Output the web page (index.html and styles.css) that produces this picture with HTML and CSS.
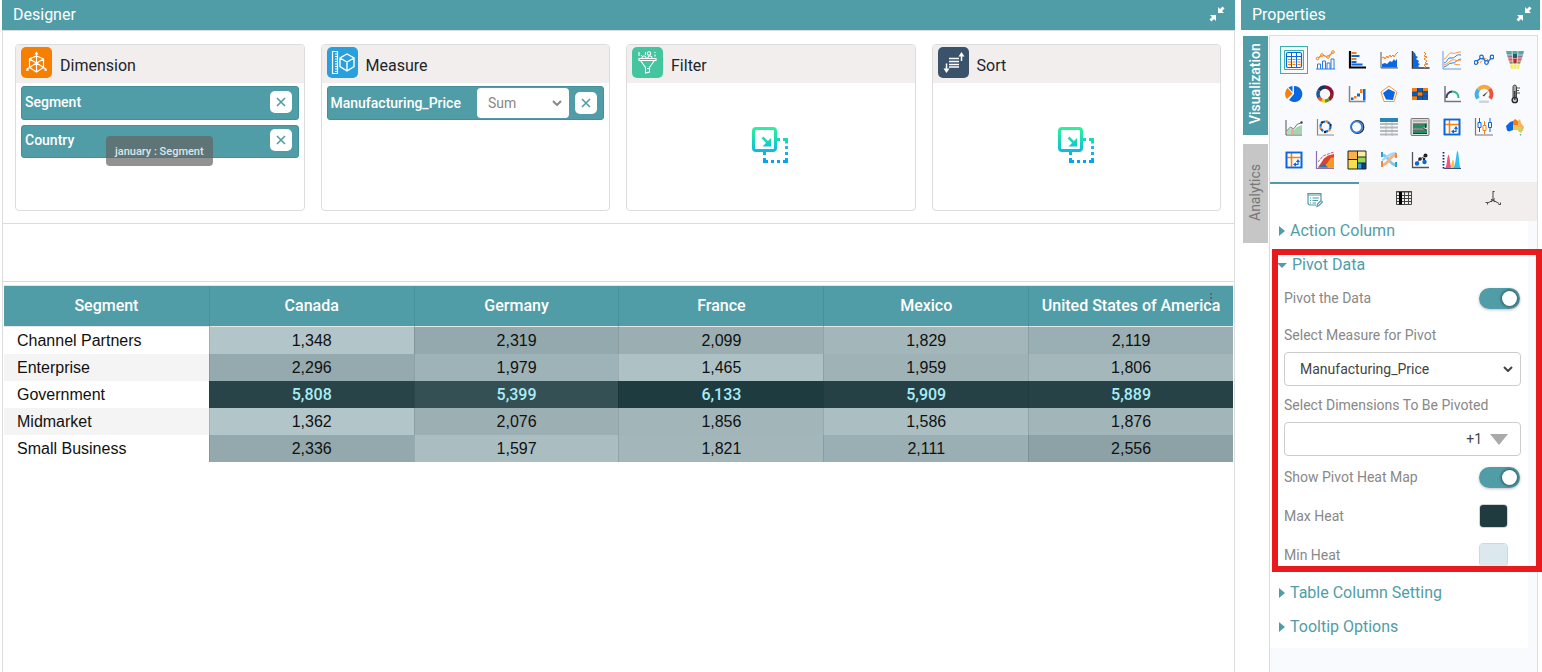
FILE: index.html
```html
<!DOCTYPE html>
<html lang="en">
<head>
    <meta charset="UTF-8">
    <meta name="viewport" content="width=device-width, initial-scale=1.0">
    <title>Designer</title>
    <link rel="stylesheet" href="styles.css">
</head>
<body>
    <svg class="defs" width="0" height="0" aria-hidden="true">
        <defs>
            <linearGradient id="dropFill" gradientUnits="userSpaceOnUse" x1="0" y1="0" x2="0" y2="37">
                <stop offset="0" stop-color="#2af598"/>
                <stop offset="1" stop-color="#009efd"/>
            </linearGradient>
            <symbol id="drop" viewBox="0 0 37 37">
                <g fill="none" stroke="url(#dropFill)" stroke-width="3">
                    <rect x="1.5" y="1.5" width="22" height="22" rx="2.5"/>
                    <path d="M10.5 10.5l7 7" stroke-width="2.5"/>
                    <path d="M25 12.5h3M31 12.5h3.5v4M34.5 19v3M34.5 25v3M34.5 31v3.5h-3.500M28 34.5h-3M22 34.5h-3M16 34.5h-3.500v-3.500M12.5 28v-3"/>
                </g>
                <path d="M19 11v8.5h-8.500z" fill="url(#dropFill)"/>
            </symbol>
            <symbol id="compress" viewBox="0 0 16 16">
                <path d="M9 1v6h6l-2-2 2.5-2.500-2-2L11 3zM7 15V9H1l2 2-2.500 2.5 2 2L5 13z" fill="#fff"/>
            </symbol>
            <symbol id="pivot" viewBox="0 0 20 20">
                <path d="M2.5 2.5h15v15h-15z" fill="#fff" stroke="#0b67df" stroke-width="1.6"/>
                <path d="M7.5 3v14M3 7.5h14" stroke="#f57f10" stroke-width="1.6"/>
                <path d="M2.5 2.5h15v15h-15z" fill="none" stroke="#0b67df" stroke-width="1.6"/>
                <path d="M10.5 14.5h3.500v-4M12.500 12l1.500-2 1.500 2M12 13l-2 1.500 2 1.500" fill="none" stroke="#0b67df" stroke-width="1.200"/>
            </symbol>
        </defs>
    </svg>

    <div class="app">
        <main class="designer">
            <header class="bar">
                <h1>Designer</h1>
                <button type="button" class="bar-btn" aria-label="Collapse designer"><svg width="16" height="16"><use href="#compress"/></svg></button>
            </header>
            <div class="designer-body">
                <div class="cards">
                    <section class="card">
                        <h2 class="card-head">
                            <svg class="card-icon" viewBox="0 0 31 31">
                                <rect width="31" height="31" rx="5" fill="#f77f00"/>
                                <g fill="none" stroke="#fff" stroke-width="1.2">
                                    <path d="M15.5 9L22.5 12v8.500L15.500 25 8.500 20.500V12zM8.500 12l7 4 7-4M15.500 6v19M8.500 20.500l7-4.500 7 4.500M8.500 20.500l-2.500 2M22.500 20.500l2.500 2"/>
                                </g>
                                <path d="M15.500 4.500l2 3h-4zM5 24l1-3.500 2 3zM26 24l-1-3.500-2 3z" fill="#fff"/>
                            </svg>
                            Dimension
                        </h2>
                        <div class="card-body">
                            <div class="chip">
                                <span>Segment</span>
                                <button type="button" class="remove" aria-label="Remove Segment"><svg viewBox="0 0 10 10"><path d="M1 1l8 8M9 1L1 9"/></svg></button>
                            </div>
                            <div class="chip">
                                <span>Country</span>
                                <button type="button" class="remove" aria-label="Remove Country"><svg viewBox="0 0 10 10"><path d="M1 1l8 8M9 1L1 9"/></svg></button>
                                <div class="tip">january : Segment</div>
                            </div>
                        </div>
                    </section>

                    <section class="card">
                        <h2 class="card-head">
                            <svg class="card-icon" viewBox="0 0 31 31">
                                <rect width="31" height="31" rx="5" fill="#27a0dc"/>
                                <g fill="none" stroke="#fff" stroke-width="1.2">
                                    <path d="M5.500 4.500h5v22h-5zM10 7H8M10 9.500H8M10 12H8M10 14.500H8M10 17H8M10 19.500H8M10 22H8M10 24.500H8"/>
                                    <path d="M20 7l7 4v8.500l-7 4.500-7-4.500V11zM13 11l7 4 7-4M20 15v9" stroke-width="1.4"/>
                                </g>
                            </svg>
                            Measure
                        </h2>
                        <div class="card-body">
                            <div class="chip chip-measure">
                                <span>Manufacturing_Price</span>
                                <select class="agg" aria-label="Aggregation">
                                    <option>Sum</option>
                                </select>
                                <button type="button" class="remove" aria-label="Remove Manufacturing_Price"><svg viewBox="0 0 10 10"><path d="M1 1l8 8M9 1L1 9"/></svg></button>
                            </div>
                        </div>
                    </section>

                    <section class="card">
                        <h2 class="card-head">
                            <svg class="card-icon" viewBox="0 0 31 31">
                                <rect width="31" height="31" rx="5" fill="#45c4a0"/>
                                <g fill="none" stroke="#fff" stroke-width="1.1">
                                    <path d="M7 11.500h17v2H7zM8.500 13.500l5 7V26l4-1v-4.500l5-7M15 21.500h2"/>
                                    <circle cx="17" cy="6.500" r="1.700"/>
                                    <path d="M10 11a2 2 0 0 1 4 0M16 11a2 2 0 0 1 4 0M7 5v4M13.500 5v3M23 5v1M23 7.500v2M9.500 8v1"/>
                                </g>
                            </svg>
                            Filter
                        </h2>
                        <div class="card-body card-empty"><svg width="37" height="37"><use href="#drop"/></svg></div>
                    </section>

                    <section class="card">
                        <h2 class="card-head">
                            <svg class="card-icon" viewBox="0 0 31 31">
                                <rect width="31" height="31" rx="5" fill="#3a536a"/>
                                <path d="M11 11.500h10M11 14.500h10M11 17.500h10M11 20h10M8.500 16.500v6M23.500 14V8" fill="none" stroke="#fff" stroke-width="1.5"/>
                                <path d="M5.500 21.500h6l-3 4.500zM20.500 9.500h6l-3-4.500z" fill="#fff"/>
                            </svg>
                            Sort
                        </h2>
                        <div class="card-body card-empty"><svg width="37" height="37"><use href="#drop"/></svg></div>
                    </section>
                </div>

                <div class="spacer"></div>

                <div class="result">
                    <button type="button" class="kebab" aria-label="Table menu"><i></i><i></i><i></i></button>
                    <table class="pivot">
                        <thead>
                            <tr>
                                <th>Segment</th>
                                <th>Canada</th>
                                <th>Germany</th>
                                <th>France</th>
                                <th>Mexico</th>
                                <th>United States of America</th>
                            </tr>
                        </thead>
                        <tbody>
                            <tr>
                                <td>Channel Partners</td>
                                <td style="background-color: #b2c5c9">1,348</td>
                                <td style="background-color: #94a9ad">2,319</td>
                                <td style="background-color: #9bafb3">2,099</td>
                                <td style="background-color: #a3b7bb">1,829</td>
                                <td style="background-color: #9aafb3">2,119</td>
                            </tr>
                            <tr>
                                <td>Enterprise</td>
                                <td style="background-color: #95aaae">2,296</td>
                                <td style="background-color: #9eb3b7">1,979</td>
                                <td style="background-color: #aec2c6">1,465</td>
                                <td style="background-color: #9fb3b7">1,959</td>
                                <td style="background-color: #a4b8bc">1,806</td>
                            </tr>
                            <tr class="hot">
                                <td>Government</td>
                                <td style="background-color: #284448">5,808</td>
                                <td style="background-color: #355054">5,399</td>
                                <td style="background-color: #1e3b3f">6,133</td>
                                <td style="background-color: #254145">5,909</td>
                                <td style="background-color: #264246">5,889</td>
                            </tr>
                            <tr>
                                <td>Midmarket</td>
                                <td style="background-color: #b2c5c9">1,362</td>
                                <td style="background-color: #9cb0b4">2,076</td>
                                <td style="background-color: #a2b6ba">1,856</td>
                                <td style="background-color: #abbec2">1,586</td>
                                <td style="background-color: #a2b6ba">1,876</td>
                            </tr>
                            <tr>
                                <td>Small Business</td>
                                <td style="background-color: #93a9ad">2,336</td>
                                <td style="background-color: #aabec2">1,597</td>
                                <td style="background-color: #a3b7bb">1,821</td>
                                <td style="background-color: #9aafb3">2,111</td>
                                <td style="background-color: #8da2a6">2,556</td>
                            </tr>
                        </tbody>
                    </table>
                </div>
            </div>
        </main>

        <aside class="properties">
            <header class="bar">
                <h1>Properties</h1>
                <button type="button" class="bar-btn" aria-label="Collapse properties"><svg width="16" height="16"><use href="#compress"/></svg></button>
            </header>
            <div class="properties-body">
                <nav class="side-tabs">
                    <button type="button" class="side-tab active">Visualization</button>
                    <button type="button" class="side-tab">Analytics</button>
                </nav>

                <div class="panel">
                    <div class="charts">
                        <button type="button" class="chart selected" aria-label="Table">
                            <svg viewBox="0 0 20 20"><path d="M.5.5h19v19H.5z" fill="none" stroke="#38b2ac"/><rect x="2.500" y="2.500" width="15" height="15" rx="1.5" fill="#fff" stroke="#0b67df" stroke-width="1.2"/><path d="M3 6.500h14M7.500 3v14M12.500 3v14" stroke="#0b67df"/><path d="M4 9.500h3M4 12h3M4 14.500h3M8.500 9.500h3M8.500 12h3M8.500 14.500h3M13.500 9.500h3M13.500 12h3M13.500 14.500h3" stroke="#f57f10"/></svg>
                        </button>
                        <button type="button" class="chart" aria-label="Combo">
                            <svg viewBox="0 0 20 20"><path d="M2.500 19v-5h3v5M7.500 19v-8h3v8M12 19v-6h3v6M16 19V9h3v10M1 19h19" fill="none" stroke="#2b7de3"/><path d="M2 9l5-4 6 2 5-5" fill="none" stroke="#f57f10" stroke-width="1.2"/><g fill="#fff" stroke="#f57f10"><circle cx="2.500" cy="8.500" r="1.3"/><circle cx="7" cy="5" r="1.3"/><circle cx="13" cy="7" r="1.3"/><circle cx="18" cy="2" r="1.3"/></g></svg>
                        </button>
                        <button type="button" class="chart" aria-label="Bar">
                            <svg viewBox="0 0 20 20"><path d="M3 1v16.500h16" fill="none" stroke="#050505" stroke-width="2.2"/><path d="M4.500 3h5M4.500 9h5" stroke="#f57f10" stroke-width="2"/><path d="M4.500 6h8M4.500 12h5M4.500 14.500h11" stroke="#0b67df" stroke-width="2"/></svg>
                        </button>
                        <button type="button" class="chart" aria-label="Area">
                            <svg viewBox="0 0 20 20"><path d="M2 2v16h17" fill="none" stroke="#555"/><path d="M3 17.500V14l3-1 2 1 3-3 2 1 2-3 1 2 2-2v8.500z" fill="#0b67df"/><path d="M3 8l2-1 1 2 2-3 1 2 2-3 1 2 2-2 1 2 2-3 2-2" fill="none" stroke="#f57f10"/></svg>
                        </button>
                        <button type="button" class="chart" aria-label="Vertical area">
                            <svg viewBox="0 0 20 20"><path d="M2.500 1v17h17" fill="none" stroke="#333" stroke-width="1.5"/><path d="M3 2l2 1 1 3 2 1-2 2 3 2-1 2 2 1-2 2 2 1.500H3z" fill="#0b67df"/><path d="M14 2l2 2-2 2 3 1-3 2 3 2-2 2 3 1-4 1 2 2-2 1" fill="none" stroke="#f57f10"/></svg>
                        </button>
                        <button type="button" class="chart" aria-label="Line">
                            <svg viewBox="0 0 20 20"><path d="M1 1v18h18" fill="none" stroke="#5f9be8"/><path d="M2 13c4-1 3-5 6-5s4 0 6-2 3-1 5-1M2 17c4-1 4-4 8-4s4-3 9-4" fill="none" stroke="#2b7de3"/><path d="M2 9c3 0 4-7 8-6 4 1 4-1 9-1M2 15c4-1 5-4 8-5s5 2 9 0M12 14l6 1" fill="none" stroke="#f5973c"/></svg>
                        </button>
                        <button type="button" class="chart" aria-label="Points">
                            <svg viewBox="0 0 20 20"><path d="M2 12l6-5 5 6 5-6" fill="none" stroke="#0b67df" stroke-width="1.3"/><path d="M3 13l4-1 3-4 3 1 2 2 3-5" fill="none" stroke="#f57f10" stroke-dasharray="2 1"/><g fill="#fff" stroke="#0b67df" stroke-width="1.2"><circle cx="2" cy="12.500" r="1.800"/><circle cx="7.500" cy="7" r="1.800"/><circle cx="12.500" cy="12.500" r="1.800"/><circle cx="18" cy="7" r="1.800"/></g></svg>
                        </button>
                        <button type="button" class="chart" aria-label="Funnel">
                            <svg viewBox="0 0 20 20"><path d="M1 1h18l-1 4H2z" fill="#59a5a0"/><path d="M2 5h16l-1 3H3z" fill="#8a75a8"/><path d="M3 8h14l-1 3H4z" fill="#e2574f"/><path d="M4 11h12l-1 3H5z" fill="#7e936a"/><path d="M5 14h10l-1 5H6z" fill="#f6e86e"/><path d="M7 1l1.500 18M13 1l-1.500 18M2 5h16M3 8h14M4 11h12M5 14h10" stroke="#fff" stroke-width=".6"/><path d="M8 4h4v4H8z" fill="#275b66"/><path d="M8.500 9h3v4h-3z" fill="#a82f3e"/></svg>
                        </button>
                        <button type="button" class="chart" aria-label="Pie">
                            <svg viewBox="0 0 20 20"><path d="M10 10V2a8 8 0 1 1-5 14z" fill="#0b67df"/><path d="M8.500 9.500L3 15a8 8 0 0 1 .5-11z" fill="#f57f10"/><path d="M8.500 8V2a8 8 0 0 0-4 1.500z" fill="#0b67df"/></svg>
                        </button>
                        <button type="button" class="chart" aria-label="Donut">
                            <svg viewBox="0 0 20 20"><g fill="none" stroke-width="3.5"><path d="M10 3a7 7 0 0 1 7 7" stroke="#8e0c37"/><path d="M17 10a7 7 0 0 1-3 5.500" stroke="#8c2424"/><path d="M14 15.500a7 7 0 0 1-4 1.500" stroke="#5a9d1b"/><path d="M10 17a7 7 0 0 1-3-.8" stroke="#f3d900"/><path d="M7 16.200a7 7 0 0 1-3-2.700" stroke="#f15a29"/><path d="M4 13.500A7 7 0 0 1 4 6.500" stroke="#1d579e"/><path d="M4 6.500A7 7 0 0 1 10 3" stroke="#163463"/></g></svg>
                        </button>
                        <button type="button" class="chart" aria-label="Waterfall">
                            <svg viewBox="0 0 20 20"><path d="M2.500 2v15.500h16" fill="none" stroke="#888" stroke-width="1.5"/><path d="M4 13.500h2.500v2.500H4zM10 9.500h3v3h-3zM16 5h2.500v11.500H16z" fill="#0b67df"/><path d="M7 12h2.500v2.500H7zM13 5h2.500v4H13z" fill="#f57f10"/></svg>
                        </button>
                        <button type="button" class="chart" aria-label="Radar">
                            <svg viewBox="0 0 20 20"><path d="M10 2l8 6-3 9.500H5L2 8z" fill="#fff" stroke="#f5973c"/><path d="M9.500 5l6.500 3-2 8-7-.5-3-6.500z" fill="#0b67df"/></svg>
                        </button>
                        <button type="button" class="chart" aria-label="Heat map">
                            <svg viewBox="0 0 20 20"><path d="M2 4h16v12H2z" fill="#0b5cc7"/><path d="M2 4h5v4H2zM7 8h6v4H7zM2 12h5v4H2zM13 4h5v3h-5z" fill="#f57f10"/><path d="M2 8h16M2 12h16M7.500 4v12M12.500 4v12" stroke="#333" stroke-width=".6"/></svg>
                        </button>
                        <button type="button" class="chart" aria-label="Arc">
                            <svg viewBox="0 0 20 20"><path d="M3 2v15.500h16" fill="none" stroke="#777" stroke-width="1.5"/><path d="M4.500 14a6 6 0 0 1 6-6.500" fill="none" stroke="#3d4060" stroke-width="2"/><path d="M10.500 7.500a6 6 0 0 1 6 6.500" fill="none" stroke="#28bf83" stroke-width="2"/></svg>
                        </button>
                        <button type="button" class="chart" aria-label="Gauge">
                            <svg viewBox="0 0 20 20"><g fill="none" stroke-width="4"><path d="M4 14.500a7.500 7.500 0 0 1 .5-9" stroke="#48aef0"/><path d="M4.500 5.500a7.500 7.500 0 0 1 11-.5" stroke="#f8a73c"/><path d="M15.500 5a7.500 7.500 0 0 1 .5 9.500" stroke="#ef5139"/></g><path d="M8.500 11.500l6-4.500-4.500 5.500z" fill="#444"/><rect x="5" y="16.500" width="10" height="2.500" rx="1" fill="#ccd6e0"/></svg>
                        </button>
                        <button type="button" class="chart" aria-label="Thermometer">
                            <svg viewBox="0 0 20 20"><path d="M8 13V2.500a1.800 1.800 0 0 1 3.500 0V13" fill="#aaa" stroke="#444"/><circle cx="9.800" cy="16" r="2.700" fill="#ccc" stroke="#222" stroke-width="1.3"/><path d="M9.800 7v9" stroke="#333" stroke-width="1.4"/><path d="M12 4h3M12 6.500h2M12 9h3" stroke="#555"/></svg>
                        </button>
                        <button type="button" class="chart" aria-label="Trend">
                            <svg viewBox="0 0 20 20"><path d="M2 3v15h16" fill="none" stroke="#555"/><path d="M3 17.500V14l3-3 2 3v3.500z" fill="#b2ddb9"/><path d="M7 17.500V11l3 2v4.500z" fill="#f4a4a4"/><path d="M10 17.500V13l3-3 5-2v9.500z" fill="#a5d5ae"/><path d="M2.500 14l4-4 3 2 4-5 4-1" fill="none" stroke="#777"/><circle cx="17.500" cy="5.500" r="1.2" fill="#444"/></svg>
                        </button>
                        <button type="button" class="chart" aria-label="Polar scatter">
                            <svg viewBox="0 0 20 20"><path d="M2.500 2v16H19" fill="none" stroke="#888" stroke-width="1.2"/><circle cx="10.500" cy="9.500" r="5" fill="none" stroke="#0b67df" stroke-dasharray="3 2" stroke-width="2.2"/><g fill="#222"><circle cx="7" cy="5.500" r="1.2"/><circle cx="15.500" cy="8" r="1.2"/><circle cx="10" cy="15" r="1.2"/></g><g fill="#f57f10"><circle cx="12" cy="4.500" r="1.2"/><circle cx="5.500" cy="11" r="1.2"/><circle cx="14.500" cy="13" r="1.2"/></g></svg>
                        </button>
                        <button type="button" class="chart" aria-label="Ring">
                            <svg viewBox="0 0 20 20"><circle cx="10.500" cy="10" r="6.200" fill="none" stroke="#333" stroke-width="1.400"/><circle cx="9.500" cy="10" r="5.600" fill="none" stroke="#2b7de3" stroke-width="1.700"/></svg>
                        </button>
                        <button type="button" class="chart" aria-label="Grid">
                            <svg viewBox="0 0 20 20"><path d="M1 1h18v4H1z" fill="#2d83b5"/><path d="M1 7h18M1 10.500h18M1 14h18M1 17.500h18" stroke="#b6bcbc" stroke-width="2"/><path d="M7 5v14M13 5v14" stroke="#a6adad" stroke-width=".6"/></svg>
                        </button>
                        <button type="button" class="chart" aria-label="Cards">
                            <svg viewBox="0 0 20 20"><rect x="1" y="1.500" width="18" height="17" rx="1" fill="#ddd" stroke="#777"/><path d="M3 4h14" stroke="#888"/><path d="M3 7.500h14v3H3zM3 13.500h14v3H3z" fill="#169563"/><path d="M3 7h14M3 11h10l3 2M3 13h14M3 16.500h14M15.500 7v4" fill="none" stroke="#333"/></svg>
                        </button>
                        <button type="button" class="chart" aria-label="Pivot"><svg><use href="#pivot"/></svg></button>
                        <button type="button" class="chart" aria-label="Candlestick">
                            <svg viewBox="0 0 20 20"><path d="M1.500 1v17H19" fill="none" stroke="#777" stroke-width="1.2"/><path d="M5.500 1v14M16 1v14" stroke="#0b67df"/><path d="M10.500 4v13" stroke="#f57f10"/><path d="M4 5.500h3v5H4zM14.500 5.500h3v5h-3z" fill="#fff" stroke="#0b67df"/><path d="M9 8.500h3v5H9z" fill="#fff" stroke="#f57f10"/></svg>
                        </button>
                        <button type="button" class="chart" aria-label="Map">
                            <svg viewBox="0 0 20 20"><path d="M1 9l4-4 3-1v9l-4 1.500-2-1z" fill="#0b67df"/><path d="M8 4l2-2 3 2v4H8z" fill="#f57f10"/><path d="M8 8h5v5H8z" fill="#f7c34a"/><path d="M13 4l2-2 1 4 3 4-1 3-2 3-3-2z" fill="#f8b25c"/><path d="M13 10h3v5l-3-1z" fill="#c5d96a"/><path d="M14.500 17h2l-1 2z" fill="#4cbfa1"/></svg>
                        </button>
                        <button type="button" class="chart" aria-label="Pivot grid"><svg><use href="#pivot"/></svg></button>
                        <button type="button" class="chart" aria-label="Stacked area">
                            <svg viewBox="0 0 20 20"><path d="M3 17.500l6-9 4-3 6-1.500v13.500z" fill="#e0402f"/><path d="M7 17.500l5-4 4-6h3v10z" fill="#f59a1c"/><path d="M3 17.500l6-4 4 4z" fill="#38729b"/><path d="M3 12l5-6 5-2 6-2" fill="none" stroke="#c65b7c" stroke-dasharray="3 1"/><path d="M1.500 1v17.500H19" fill="none" stroke="#8a6fb5" stroke-width="1.2"/></svg>
                        </button>
                        <button type="button" class="chart" aria-label="Treemap">
                            <svg viewBox="0 0 20 20"><path d="M1 1h18v18H1z" fill="#f3df4a"/><path d="M1 1h9v8H1z" fill="#fdb147"/><path d="M10 1h9v6h-9z" fill="#f9eda0"/><path d="M11 7h8v6h-8z" fill="#8fdc5c"/><path d="M11 13h4v6h-4z" fill="#27a3e2"/><path d="M15 13h4v6h-4z" fill="#0b3fa8"/><path d="M1 1h18v18H1zM1 9.500h9.500M10.500 1v18M10.500 7H19M10.500 13H19M15 13v6" fill="none" stroke="#222"/></svg>
                        </button>
                        <button type="button" class="chart" aria-label="Sankey">
                            <svg viewBox="0 0 20 20"><path d="M3 5c7 0 7 10 14 10" fill="none" stroke="#7fcbea" stroke-width="3"/><path d="M3 15c7 0 7-10 14-10" fill="none" stroke="#f6b184" stroke-width="3"/><path d="M3 10c4 0 4-6 14-7" fill="none" stroke="#9ed7ef" stroke-width="2"/><path d="M3 2v5M17 12v5" stroke="#2f9ed8" stroke-width="2"/><path d="M3 11v6M17 3v5" stroke="#f08843" stroke-width="2"/></svg>
                        </button>
                        <button type="button" class="chart" aria-label="Scatter">
                            <svg viewBox="0 0 20 20"><path d="M2.500 2v15.500H19" fill="none" stroke="#555" stroke-width="1.3"/><path d="M6 14l4-5 5-3" fill="none" stroke="#333" stroke-width=".8"/><g fill="#222"><circle cx="10" cy="9" r="1.800"/><circle cx="15.500" cy="5.500" r="2"/><circle cx="14" cy="9" r="1.3"/></g><g fill="#0b67df"><circle cx="7" cy="13.500" r="2.2"/><circle cx="14.500" cy="12" r="2.2"/></g></svg>
                        </button>
                        <button type="button" class="chart" aria-label="Peaks">
                            <svg viewBox="0 0 20 20"><path d="M1 1h18v18H1z" fill="#fff"/><path d="M3 18c2 0 2-13 3.500-13S8 18 10 18z" fill="#f0567c"/><path d="M8 18c1.500 0 1.500-8 3-8s1 8 3 8z" fill="#f9c34e"/><path d="M11 18c3 0 3-17 4.500-17S17 18 19 18z" fill="#33c2f0"/><path d="M1.500 2v17" stroke="#1a237e" stroke-width="1.8" stroke-dasharray="1.5 1.5"/><path d="M2 18.500h17" stroke="#38508a"/></svg>
                        </button>
                    </div>

                    <div class="tabs">
                        <button type="button" class="tab active" aria-label="Settings">
                            <svg width="16" height="16" viewBox="0 0 16 16" fill="none" stroke="#4f9ca6" stroke-width="1.2"><path d="M9 13H3a2 2 0 0 1-2-2V1.500h13V8M1 3h13M3 6h1M5.500 6H12M3 8.500h1M5.500 8.500H11M3 11h1M5.500 11H9"/><path d="M10 14.500l.5-2.500 3.500-3.500 1.500 1.500-3.500 3.500z"/></svg>
                        </button>
                        <button type="button" class="tab" aria-label="Columns">
                            <svg width="16" height="16" viewBox="0 0 16 16" fill="none" stroke="#444"><path d="M.5 1.500h15v13H.5zM0 2h16M.5 5.500h15M.5 8.500h15M.5 11.500h15M8.500 2v12M12.500 2v12"/><path d="M4.500 2v12.500" stroke="#000" stroke-width="3"/></svg>
                        </button>
                        <button type="button" class="tab" aria-label="Axis">
                            <svg width="16" height="16" viewBox="0 0 16 16" fill="none" stroke="#444"><path d="M8 1v9l-6 3.500M8 10l6 3.500M6 9l4 3M10 8.500L6 12M8 1.500h1.500M.5 12.500h2v2M15.500 12.500v2h-2"/></svg>
                        </button>
                    </div>

                    <div class="options">
                        <details>
                            <summary>Action Column</summary>
                        </details>
                        <details class="pivot-data" open>
                            <summary>Pivot Data</summary>
                            <div class="fields">
                                <div class="row">
                                    <label for="pivotOn">Pivot the Data</label>
                                    <input type="checkbox" class="toggle" id="pivotOn" checked>
                                </div>
                                <div class="field">
                                    <label for="measure">Select Measure for Pivot</label>
                                    <select class="box" id="measure">
                                        <option>Manufacturing_Price</option>
                                    </select>
                                </div>
                                <div class="field">
                                    <label for="dims">Select Dimensions To Be Pivoted</label>
                                    <button type="button" class="box multi" id="dims">+1 <i class="caret"></i></button>
                                </div>
                                <div class="row">
                                    <label for="heatOn">Show Pivot Heat Map</label>
                                    <input type="checkbox" class="toggle" id="heatOn" checked>
                                </div>
                                <div class="row">
                                    <label for="maxHeat">Max Heat</label>
                                    <input type="color" class="swatch" id="maxHeat" value="#1f3b40">
                                </div>
                                <div class="row">
                                    <label for="minHeat">Min Heat</label>
                                    <input type="color" class="swatch" id="minHeat" value="#dbe9ee">
                                </div>
                            </div>
                            <div class="highlight"></div>
                        </details>
                        <details>
                            <summary>Table Column Setting</summary>
                        </details>
                        <details>
                            <summary>Tooltip Options</summary>
                        </details>
                    </div>
                </div>
            </div>
        </aside>
    </div>
</body>
</html>
```
FILE: styles.css
```css
* {
    box-sizing: border-box;
}

body {
    margin: 0;
    background-color: #fff;
    color: #212529;
    font-family: Roboto, sans-serif;
    font-size: 14px;
    overflow-x: hidden;
}

button,
select,
input {
    font-family: inherit;
    margin: 0;
}

button {
    border: none;
    padding: 0;
    background: none;
    cursor: pointer;
}

svg {
    display: block;
}

.defs {
    position: absolute;
}

.app {
    display: flex;
    gap: 6px;
    min-height: 100vh;
    padding: 0 2px;
}

/* title bars */
.bar {
    display: flex;
    align-items: center;
    justify-content: space-between;
    height: 30px;
    padding: 0 10px 2px 11px;
    background-color: #509da8;
    color: #fff;
}

.bar h1 {
    margin: 0;
    font-size: 16px;
    font-weight: 400;
}

/* designer */
.designer {
    display: flex;
    flex-direction: column;
    flex: 1;
    min-width: 0;
}

.designer-body {
    flex: 1;
    border: 1px solid #dcdcdc;
    border-bottom: none;
}

.cards {
    display: grid;
    grid-template-columns: repeat(4, 1fr);
    gap: 16px;
    padding: 13px 13px 12px 12px;
    border-bottom: 1px solid #dcdcdc;
}

.card {
    min-width: 0;
    min-height: 167px;
    display: flex;
    flex-direction: column;
    border: 1px solid #dcdcdc;
    border-radius: 4px;
}

.card-head {
    display: flex;
    gap: 8px;
    height: 38px;
    margin: 0;
    padding: 2px 5px;
    background-color: #f2eeee;
    border-radius: 3px 3px 0 0;
    font-size: 16px;
    font-weight: 400;
    line-height: 38px;
    color: #212529;
}

.card-icon {
    width: 31px;
    height: 31px;
}

.card-body {
    flex: 1;
    display: flex;
    flex-direction: column;
    gap: 5px;
    padding: 3px 5px 5px;
}

.card-empty {
    align-items: center;
    justify-content: center;
}

.chip {
    position: relative;
    display: flex;
    align-items: center;
    gap: 6px;
    height: 34px;
    padding: 0 6px 2px 3px;
    background-color: #509da8;
    border: 1px solid #43909a;
    border-radius: 3px;
    color: #fff;
    font-weight: 500;
}

.chip + .chip {
    height: 33px;
    padding-bottom: 4px;
}

.chip span {
    flex: 1;
}

.chip-measure {
    padding-bottom: 0;
}

.remove {
    display: flex;
    align-items: center;
    justify-content: center;
    width: 22px;
    height: 22px;
    background-color: #fff;
    border-radius: 5px;
}

.remove svg {
    width: 10px;
    height: 10px;
    fill: none;
    stroke: #509da8;
    stroke-width: 1.6;
}

.agg {
    width: 92px;
    height: 30px;
    padding: 0 11px;
    appearance: none;
    border: none;
    border-radius: 4px;
    background: #fff url("data:image/svg+xml,%3Csvg xmlns='http://www.w3.org/2000/svg' width='10' height='6'%3E%3Cpath d='M1 1l4 4 4-4' fill='none' stroke='%23888' stroke-width='2'/%3E%3C/svg%3E") no-repeat right 7px center;
    color: #888;
    font-size: 14px;
}

.tip {
    position: absolute;
    left: 84px;
    top: 10px;
    height: 30px;
    padding: 0 9px;
    background-color: rgba(100, 100, 100, 0.7);
    border-radius: 4px;
    color: #dce6e8;
    font-size: 11px;
    line-height: 31px;
    white-space: nowrap;
}

.spacer {
    height: 58px;
    border-bottom: 1px solid #dcdcdc;
}

/* pivot table */
.result {
    position: relative;
    padding: 3px 1px 0;
}

.kebab {
    position: absolute;
    top: 11px;
    right: 22px;
    display: flex;
    flex-direction: column;
    gap: 2px;
}

.kebab i {
    width: 2px;
    height: 2px;
    background-color: #666;
}

.pivot {
    width: 100%;
    table-layout: fixed;
    border-collapse: separate;
    border-spacing: 0;
    border-top: 1px solid #e6e6e6;
}

.pivot th {
    height: 41px;
    padding: 0 0 2px;
    background-color: #509da8;
    border-left: 1px solid #4790a0;
    border-bottom: 1px solid #e6e6e6;
    color: #fff;
    font-size: 16px;
    font-weight: 500;
    white-space: nowrap;
}

.pivot td {
    height: 27px;
    padding: 0;
    border-left: 1px solid rgba(0, 0, 0, 0.1);
    color: #111;
    font-family: "Liberation Sans", Arial, sans-serif;
    font-size: 16px;
    text-align: center;
}

.pivot th:first-child,
.pivot td:first-child {
    border-left: none;
}

.pivot td:first-child {
    padding-left: 13px;
    text-align: left;
}

.pivot tbody tr:nth-child(even) td:first-child {
    background-color: #f4f4f4;
}

.pivot .hot td:not(:first-child) {
    color: #a9ecf7;
    font-family: Roboto, sans-serif;
    font-weight: 500;
}

/* properties */
.properties {
    display: flex;
    flex-direction: column;
    width: 299px;
}

.properties .bar {
    padding: 0 8px 2px 11px;
}

.properties-body {
    flex: 1;
    display: flex;
    gap: 1px;
    padding: 5px 2px 0;
}

.side-tabs {
    display: flex;
    flex-direction: column;
    gap: 9px;
    padding-top: 1px;
}

.side-tab {
    width: 25px;
    height: 99px;
    padding: 0 1px 3px 0;
    background-color: #c6c6c6;
    color: #777;
    font-size: 14px;
    writing-mode: vertical-rl;
    transform: rotate(180deg);
}

.side-tab {
    padding: 3px 0 0 1px;
}

.side-tab.active {
    background-color: #509da8;
    color: #fff;
    font-weight: 500;
}

.panel {
    flex: 1;
    min-width: 0;
    background-color: #f9fafd;
    border: 1px solid #dcdcdf;
    border-bottom: none;
}

.charts {
    display: grid;
    grid-template-columns: repeat(8, 1fr);
    grid-template-rows: 34px;
    grid-auto-rows: 33px;
    place-items: center;
    padding: 7px 6px 6px 8px;
}

.chart {
    display: flex;
    align-items: center;
    justify-content: center;
    width: 28px;
    height: 28px;
}

.chart svg {
    width: 20px;
    height: 20px;
}

.chart.selected {
    border: 1px solid #38b2ac;
}

.tabs {
    display: grid;
    grid-template-columns: repeat(3, 1fr);
}

.tab {
    display: flex;
    justify-content: center;
    height: 39px;
    padding-top: 8px;
    background-color: #f2eeed;
}

.tab.active {
    border-top: 2px solid #509da8;
    background-color: #fff;
}

.options {
    display: flex;
    flex-direction: column;
    gap: 14px;
    margin-right: 9px;
    padding-bottom: 11px;
    background-color: #fff;
}

summary {
    display: flex;
    align-items: center;
    gap: 5px;
    padding-left: 9px;
    color: #509da8;
    font-size: 16px;
    line-height: 20px;
    cursor: pointer;
}

summary::before {
    content: "";
    border: 5px solid transparent;
    border-left: 6px solid #509da8;
    border-right: none;
}

details[open] summary::before {
    border: 5px solid transparent;
    border-top-color: #509da8;
    border-bottom: none;
}

.pivot-data {
    position: relative;
    height: 314px;
}

.pivot-data summary {
    padding-left: 7px;
}

.highlight {
    position: absolute;
    top: -6px;
    bottom: -3px;
    left: 2px;
    right: -14px;
    border: 6px solid #e81a1c;
    pointer-events: none;
}

.fields {
    display: flex;
    flex-direction: column;
    padding: 12px 7px 0 14px;
    color: #888;
}

.row {
    display: flex;
    align-items: center;
    justify-content: space-between;
    height: 22px;
    margin-bottom: 17px;
    padding-right: 1px;
}

.field {
    display: flex;
    flex-direction: column;
    gap: 8px;
    margin-bottom: 10px;
}

.field label {
    line-height: 18px;
}

.box {
    height: 34px;
    width: 100%;
    border: 1px solid #ccc;
    border-radius: 4px;
    background-color: #fff;
    color: #444;
    font-size: 14px;
}

select.box {
    padding: 0 15px;
    appearance: none;
    background: #fff url("data:image/svg+xml,%3Csvg xmlns='http://www.w3.org/2000/svg' width='10' height='6'%3E%3Cpath d='M1 1l4 4 4-4' fill='none' stroke='%23444' stroke-width='2'/%3E%3C/svg%3E") no-repeat right 7px center;
}

.multi {
    display: flex;
    align-items: center;
    justify-content: flex-end;
    gap: 8px;
    padding-right: 12px;
}

.caret {
    border: 9px solid transparent;
    border-top: 11px solid #aaa;
    border-bottom: none;
}

.toggle {
    position: relative;
    width: 41px;
    height: 21px;
    appearance: none;
    border-radius: 11px;
    background-color: #509da8;
    box-shadow: 0 1px 3px rgba(0, 0, 0, 0.25);
}

.toggle::before {
    content: "";
    position: absolute;
    top: 3px;
    right: 3px;
    width: 15px;
    height: 15px;
    border-radius: 50%;
    background-color: #fff;
    box-shadow: 0 0 3px 1px rgba(0, 0, 0, 0.45);
}

.swatch {
    width: 29px;
    height: 24px;
    margin-right: 12px;
    padding: 0;
    appearance: none;
    border: 1px solid #d5d5d5;
    border-radius: 4px;
    background: none;
    overflow: hidden;
}

.swatch::-webkit-color-swatch-wrapper {
    padding: 0;
}

.swatch::-webkit-color-swatch {
    border: none;
}
```
